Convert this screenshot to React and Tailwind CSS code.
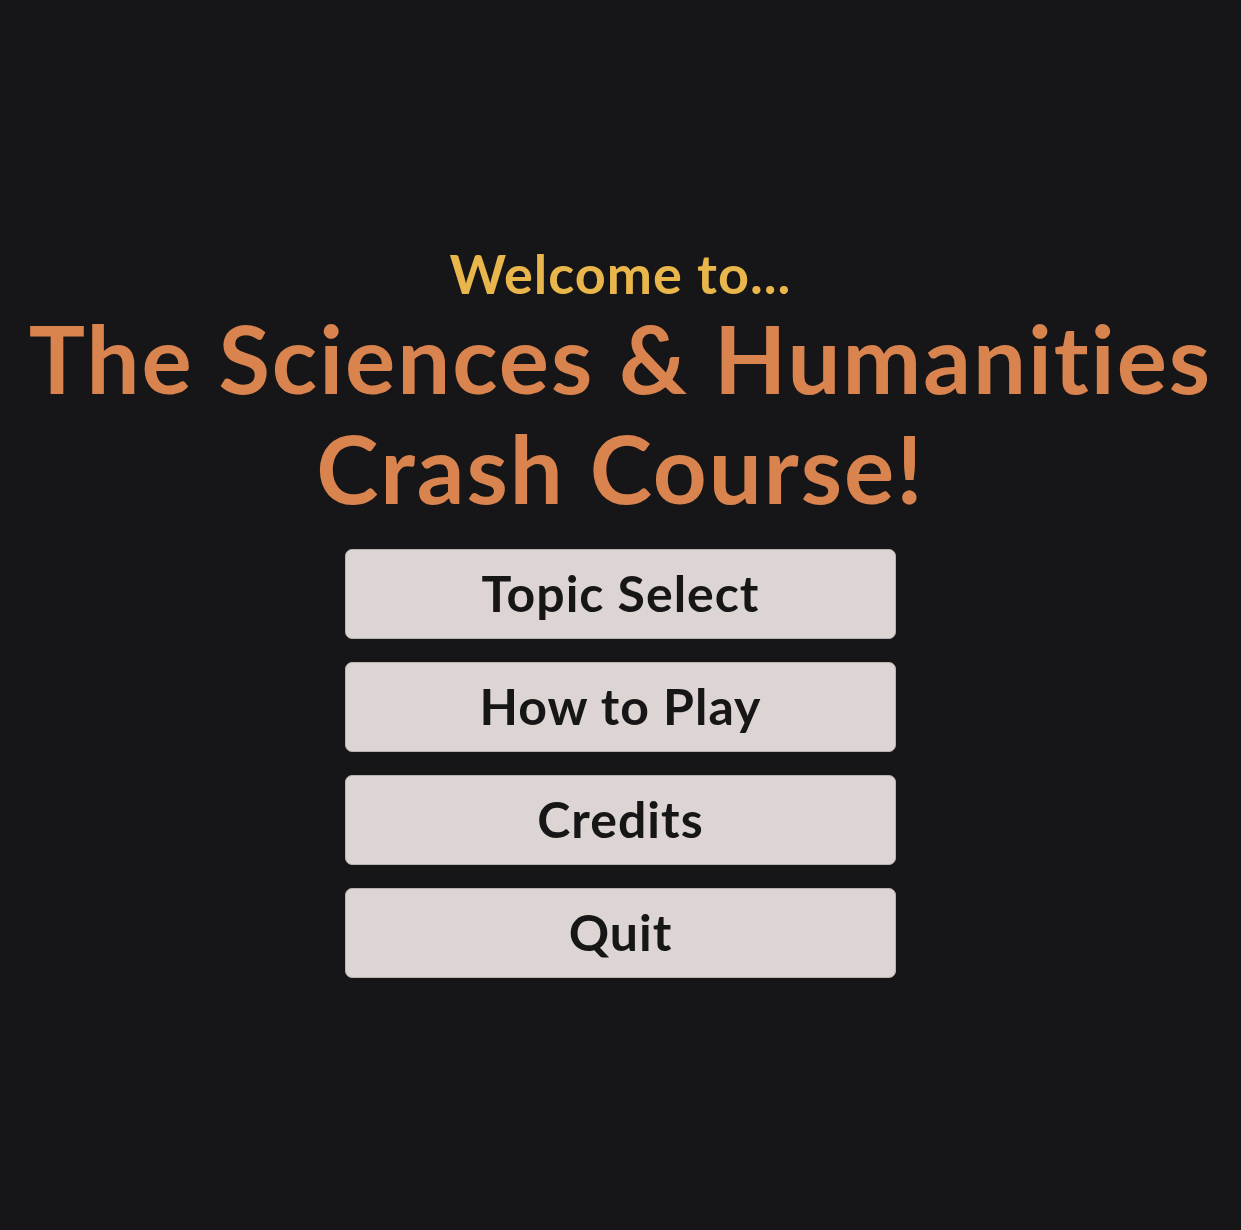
import React from 'react';

const BUTTONS = ['Topic Select', 'How to Play', 'Credits', 'Quit'];

export default function App() {
  return (
    <div
      className="min-h-screen w-full bg-[#161618] flex flex-col items-center justify-center pb-[8px]"
      style={{ fontFamily: 'Lato, "Noto Sans", sans-serif' }}
    >
      <p className="text-[#e8b64a] text-[54px] font-bold leading-[58px] tracking-[1px]">Welcome to...</p>
      <h1 className="text-[#d9834f] text-[94px] font-bold leading-[110px] text-center tracking-[2px]">
        The Sciences &amp; Humanities
        <br />
        Crash Course!
      </h1>
      <div className="mt-[26px] flex flex-col gap-[23px]">
        {BUTTONS.map(label => (
          <button
            key={label}
            className="w-[551px] h-[90px] rounded-[7px] bg-[#ddd5d3] border border-[#b8b2b0] text-[#161616] text-[50px] font-bold tracking-[1px] flex items-center justify-center"
          >
            {label}
          </button>
        ))}
      </div>
    </div>
  );
}
